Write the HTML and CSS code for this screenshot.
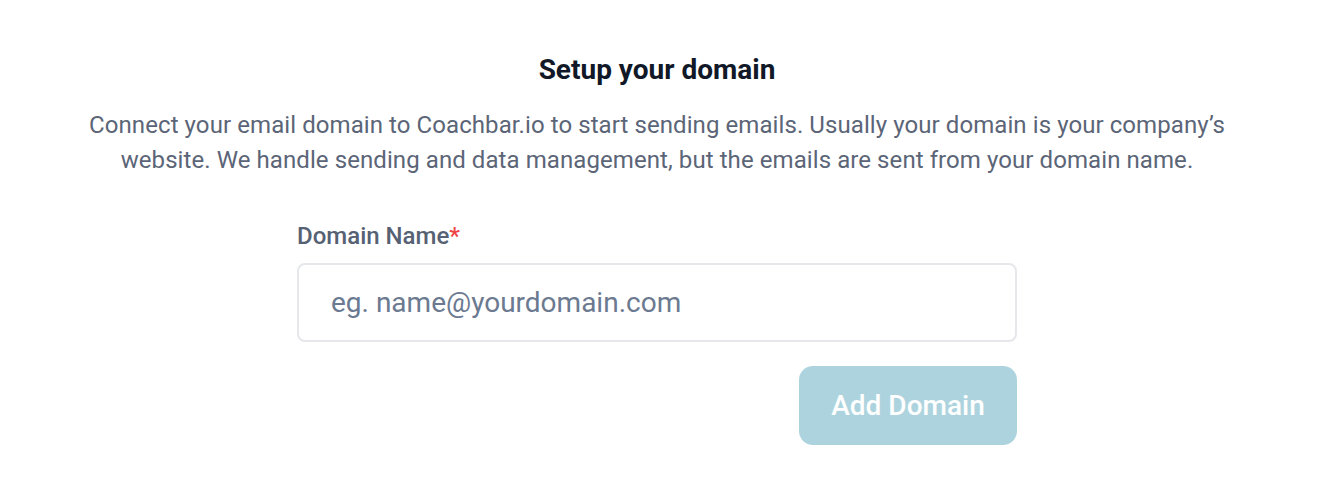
FILE: index.html
```html
<!DOCTYPE html>
<html lang="en">
<head>
<meta charset="utf-8">
<title>Setup your domain</title>
<link rel="stylesheet" href="styles.css">
</head>
<body>
<main class="page">
  <section class="setup">
    <h1 class="title">Setup your domain</h1>
    <p class="desc">Connect your email domain to Coachbar.io to start sending emails. Usually your domain is your company’s<br>website. We handle sending and data management, but the emails are sent from your domain name.</p>
    <form class="form">
      <label class="label" for="domain">Domain Name<span class="req">*</span></label>
      <input class="input" id="domain" type="text" placeholder="eg. name@yourdomain.com">
      <div class="actions">
        <button class="btn" type="button" disabled>Add Domain</button>
      </div>
    </form>
  </section>
</main>
</body>
</html>
```
FILE: styles.css
```css
* { box-sizing: border-box; }
html, body { margin: 0; padding: 0; background: #fff; }
body { font-family: Roboto, "Noto Sans", Arial, sans-serif; }
.page { width: 1314px; padding-top: 53px; }
.setup { display: flex; flex-direction: column; align-items: center; }
.title { margin: 0; font-size: 28px; font-weight: 700; color: #111827; line-height: 34px; }
.desc { margin: 21px 0 0; font-size: 24px; line-height: 35px; color: #5b6577; text-align: center; font-weight: 400; letter-spacing: 0.08px; }
.form { width: 720px; margin-top: 44px; display: flex; flex-direction: column; }
.label { font-size: 24px; font-weight: 500; color: #566173; line-height: 28px; }
.req { color: #ef4444; }
.input { margin-top: 13px; height: 79px; border: 2px solid #e6e7ea; border-radius: 8px; padding: 0 32px; font-family: inherit; font-size: 28px; color: #111827; outline: none; }
.input::placeholder { color: #6b7a90; }
.actions { display: flex; justify-content: flex-end; margin-top: 24px; }
.btn { width: 218px; height: 79px; background: #add4de; border: 0; border-radius: 14px; color: #fff; font-family: inherit; font-size: 28px; font-weight: 500; }
```
